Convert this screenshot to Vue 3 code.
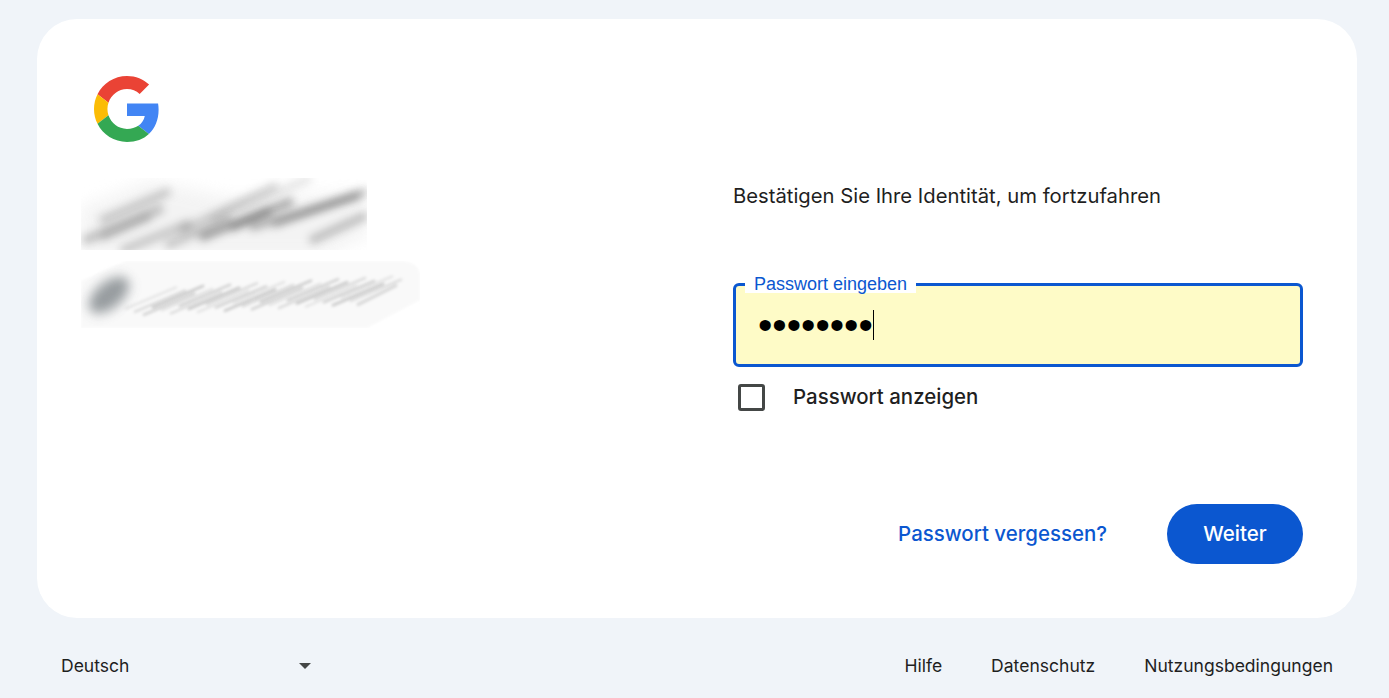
<script setup>
const nameStrokes = [
  [19, 43, 89, 13, 0.2, 8], [2, 63, 82, 30, 0.22, 9], [99, 53, 196, 7, 0.18, 7], [119, 60, 212, 23, 0.34, 8],
  [169, 50, 279, 17, 0.3, 7], [192, 47, 286, 13, 0.24, 7], [229, 63, 286, 37, 0.24, 8], [85, 68, 150, 40, 0.2, 8],
  [40, 73, 110, 45, 0.18, 9], [150, 50, 190, 33, 0.22, 8], [20, 60, 70, 38, 0.16, 8], [130, 42, 230, 0, 0.1, 8]
]
const mailStrokes = []
for (let i = 0; i < 26; i++) {
  const x = 44 + i * 9
  const y = 48 - i * 0.45 + (i % 3) * 3.5
  mailStrokes.push([x, y, x + 52, y - 22, 0.09 + (i % 4) * 0.04, 2.4])
}
mailStrokes.push([276, 44, 316, 24, 0.15, 3])
</script>

<template>
  <div class="page">
    <main class="card">
      <section class="identity">
        <svg class="logo" viewBox="0 0 48 48" aria-label="Google">
          <path fill="#EA4335" d="M24 9.5c3.54 0 6.71 1.22 9.21 3.6l6.85-6.85C35.9 2.38 30.47 0 24 0 14.62 0 6.51 5.38 2.56 13.22l7.98 6.19C12.43 13.72 17.74 9.5 24 9.5z" />
          <path fill="#4285F4" d="M46.98 24.55c0-1.57-.15-3.09-.38-4.55H24v9.02h12.94c-.58 2.96-2.26 5.48-4.78 7.18l7.73 6c4.51-4.18 7.09-10.36 7.09-17.65z" />
          <path fill="#FBBC05" d="M10.53 28.59c-.48-1.45-.76-2.99-.76-4.59s.27-3.14.76-4.59l-7.98-6.19C.92 16.46 0 20.12 0 24c0 3.88.92 7.54 2.56 10.78l7.97-6.19z" />
          <path fill="#34A853" d="M24 48c6.48 0 11.93-2.13 15.89-5.81l-7.73-6c-2.15 1.45-4.92 2.3-8.16 2.3-6.26 0-11.57-4.22-13.47-9.91l-7.98 6.19C6.51 42.62 14.62 48 24 48z" />
        </svg>
        <svg class="smear name" viewBox="0 0 286 72" aria-hidden="true">
          <defs>
            <filter id="soft" x="-30%" y="-100%" width="160%" height="300%"><feGaussianBlur stdDeviation="4" /></filter>
            <filter id="softer" x="-30%" y="-100%" width="160%" height="300%"><feGaussianBlur stdDeviation="1.7" /></filter>
            <filter id="wide" x="-60%" y="-60%" width="220%" height="220%"><feGaussianBlur stdDeviation="6" /></filter>
            <filter id="edge" x="-5%" y="-5%" width="110%" height="110%"><feGaussianBlur stdDeviation="1" /></filter>
            <filter id="haze" x="-20%" y="-40%" width="140%" height="180%"><feGaussianBlur stdDeviation="8" /></filter>
          </defs>
          <polygon points="0,30 70,2 150,20 286,14 286,58 240,80 0,80" fill="#efefef" opacity="0.7" filter="url(#haze)" />
          <line
            v-for="(s, i) in nameStrokes"
            :key="i"
            :x1="s[0]" :y1="s[1]" :x2="s[2]" :y2="s[3]"
            stroke="#000" :stroke-opacity="s[4]" :stroke-width="s[5]" filter="url(#soft)"
          />
        </svg>
        <svg class="smear mail" viewBox="0 0 339 67" aria-hidden="true">
          <path d="M0 20 L45 0 H322 Q339 2 339 16 V39 L286 67 H0 Z" fill="#f9f9f9" filter="url(#edge)" />
          <ellipse cx="28" cy="34" rx="24" ry="13" transform="rotate(-40 28 34)" fill="#868c90" opacity="0.85" filter="url(#wide)" />
          <line
            v-for="(s, i) in mailStrokes"
            :key="i"
            :x1="s[0]" :y1="s[1]" :x2="s[2]" :y2="s[3]"
            stroke="#000" :stroke-opacity="s[4]" :stroke-width="s[5]" filter="url(#softer)"
          />
        </svg>
      </section>

      <section class="form">
        <h1 class="prompt">Bestätigen Sie Ihre Identität, um fortzufahren</h1>
        <div class="field">
          <span class="field-label">Passwort eingeben</span>
          <span class="dots">••••••••</span>
          <span class="caret"></span>
        </div>
        <label class="show">
          <span class="box"></span>
          <span class="show-text">Passwort anzeigen</span>
        </label>
        <div class="actions">
          <a class="forgot">Passwort vergessen?</a>
          <button class="next" type="button">Weiter</button>
        </div>
      </section>
    </main>

    <footer class="footer">
      <div class="lang">
        <span>Deutsch</span>
        <span class="arrow"></span>
      </div>
      <nav class="links">
        <a>Hilfe</a>
        <a>Datenschutz</a>
        <a>Nutzungsbedingungen</a>
      </nav>
    </footer>
  </div>
</template>

<style>
html, body { margin: 0; background: #f0f4f9; }
</style>

<style scoped>
.page {
  box-sizing: border-box;
  width: 1389px;
  height: 698px;
  overflow: hidden;
  padding: 19px 32px 0 37px;
  background: #f0f4f9;
  font-family: Inter, "Liberation Sans", sans-serif;
  color: #1f1f1f;
}
.card {
  box-sizing: border-box;
  width: 1320px;
  height: 599px;
  padding: 57px 54px 54px 44px;
  background: #fff;
  border-radius: 40px;
  display: grid;
  grid-template-columns: 570px 570px;
  column-gap: 82px;
}
.identity { display: flex; flex-direction: column; align-items: flex-start; }
.logo { width: 66px; height: 66px; margin-left: 13px; }
.smear { display: block; }
.name { width: 286px; height: 72px; margin-top: 36px; }
.mail { width: 339px; height: 67px; margin-top: 11px; }
.form { display: flex; flex-direction: column; align-items: stretch; padding-top: 107px; }
.prompt { margin: 0; font-size: 20.25px; line-height: 26px; font-weight: 400; }
.field {
  box-sizing: border-box;
  position: relative;
  height: 84px;
  margin-top: 74px;
  padding-left: 23px;
  display: flex;
  align-items: center;
  background: #fefbc7;
  border: 3px solid #0b57d0;
  border-radius: 6px;
}
.field-label {
  position: absolute;
  left: 9px;
  top: -11px;
  padding: 0 9px;
  background: #fff;
  color: #0b57d0;
  font-family: "Liberation Sans", Arial, sans-serif;
  font-size: 18px;
  line-height: 18px;
}
.dots {
  font-family: "Liberation Sans", Arial, sans-serif;
  font-size: 41px;
  line-height: 30px;
  color: #000;
  margin-left: -1px;
}
.caret { width: 1px; height: 30px; background: #000; }
.show {
  display: flex;
  align-items: center;
  gap: 28px;
  margin: 17px 0 0 5px;
  font-size: 20.45px;
  font-weight: 500;
}
.show-text { line-height: 24px; padding-bottom: 2px; }
.box {
  box-sizing: border-box;
  width: 27px;
  height: 27px;
  border: 3px solid #444746;
  border-radius: 3px;
}
.actions {
  display: flex;
  align-items: center;
  justify-content: flex-end;
  gap: 60px;
  margin-top: 93px;
}
.forgot { color: #0b57d0; font-size: 20.45px; font-weight: 500; padding-bottom: 2px; }
.next {
  width: 136px;
  height: 60px;
  padding: 0 0 2px;
  border: 0;
  border-radius: 30px;
  background: #0b57d0;
  color: #fff;
  font: 500 20.5px Inter, "Liberation Sans", sans-serif;
}
.footer {
  display: flex;
  justify-content: space-between;
  align-items: center;
  height: 94px;
  padding: 0 24px;
  width: 1320px;
  box-sizing: border-box;
  font-size: 17.55px;
}
.lang { width: 250px; display: flex; justify-content: space-between; align-items: center; }
.arrow {
  width: 0;
  height: 0;
  margin-top: 2px;
  border-left: 6px solid transparent;
  border-right: 6px solid transparent;
  border-top: 6px solid #444746;
}
.links { display: flex; gap: 49px; }
</style>
